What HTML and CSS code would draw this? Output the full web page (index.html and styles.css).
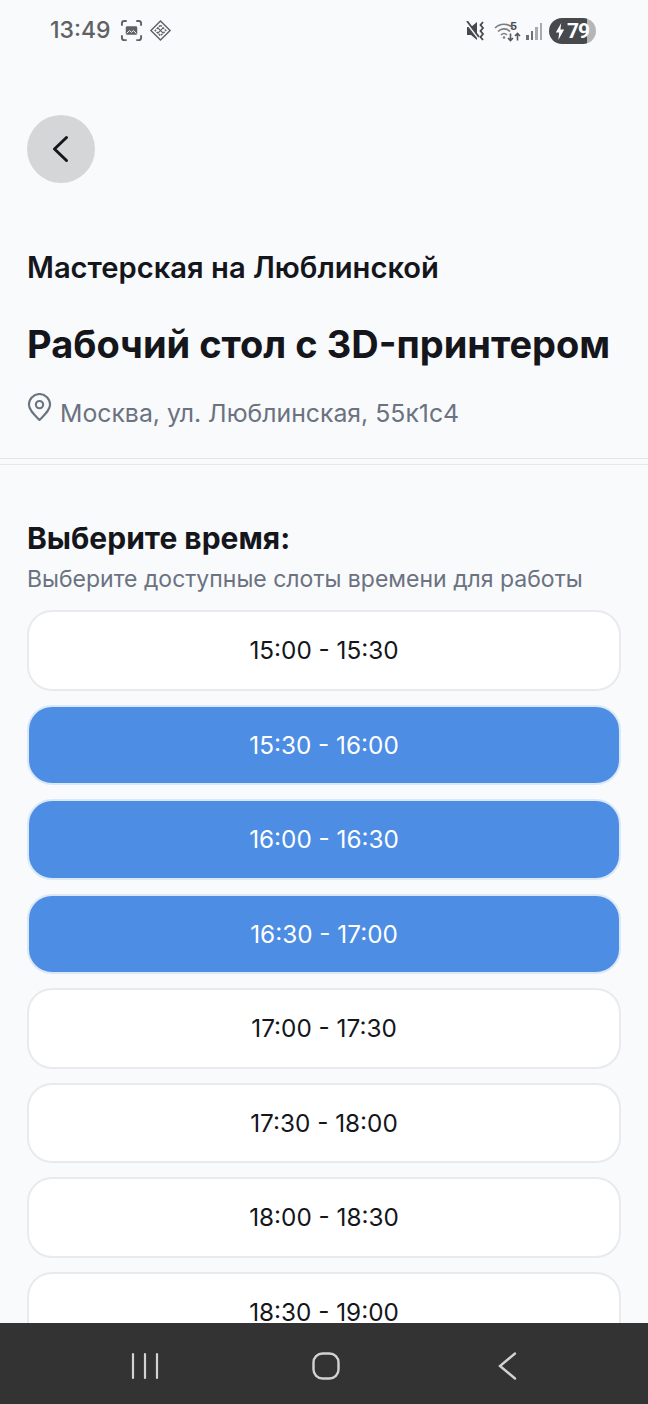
FILE: index.html
```html
<!DOCTYPE html>
<html lang="ru">
<head>
  <meta charset="UTF-8" />
  <meta name="viewport" content="width=device-width, initial-scale=1.0" />
  <title>Выбор времени</title>
  <link rel="stylesheet" href="styles.css">
</head>
<body>
  <div class="app">
    <!-- Статус бар -->
    <div class="status-bar">
      <div class="status-left">
        <span class="clock">13:49</span>
        <svg class="status-icon" width="23" height="23" viewBox="0 0 24 24" fill="none" stroke="#5f6165" stroke-width="2">
          <path d="M2 7V4.500A2.500 2.500 0 0 1 4.500 2H7M17 2h2.500A2.500 2.500 0 0 1 22 4.500V7M22 17v2.500a2.500 2.500 0 0 1-2.500 2.500H17M7 22H4.500A2.500 2.500 0 0 1 2 19.500V17"/>
          <rect x="6" y="7.500" width="12" height="9" rx="1.500" fill="#5f6165" stroke="none"/>
          <path d="M7 15l3-3 2 2 2-2 3 3" stroke="#f9fafc" stroke-width="1"/>
        </svg>
        <svg class="status-icon" width="23" height="23" viewBox="0 0 24 24" fill="none" stroke="#5f6165" stroke-width="1.500">
          <path d="M12 2l10 10-10 10L2 12z"/>
          <path d="M12 6.500l5.500 5.500-5.500 5.500L6.500 12z" stroke-dasharray="2 1.200"/>
          <path d="M9 9l6 6M15 9l-6 6" stroke-width="1.200"/>
        </svg>
      </div>
      <div class="status-right">
        <svg class="mute-icon" width="20" height="20" viewBox="0 0 20 20" fill="none">
          <path d="M1 6h4l6-5v18l-6-5H1z" fill="#48494d"/>
          <path d="M0 1l13 17" stroke="#f9fafc" stroke-width="2"/>
          <path d="M1 0l12 16" stroke="#48494d" stroke-width="1.800"/>
          <path d="M17 1l-2.500 3 2.500 3-2.500 3 2.500 3-2.500 3 2.500 3" stroke="#48494d" stroke-width="1.800"/>
        </svg>
        <svg width="32" height="24" viewBox="0 0 32 24" fill="none" stroke="#7b7d81" stroke-width="1.600">
          <path d="M1 9c5-5 13-5 18 0M4 12.500c3.500-3.500 8.500-3.500 12 0M7 16c2-2 4-2 6 0"/>
          <circle cx="10" cy="18.500" r="1.300" fill="#7b7d81" stroke="none"/>
          <path d="M16.500 14.500v7M14 19l2.500 2.500L19 19" stroke="#55575b"/>
          <path d="M23.500 21.500v-7M21 17l2.500-2.500L26 17" stroke="#55575b"/>
        </svg>
        <span class="wifi-num">5</span>
        <div class="signal">
          <i class="sig-1"></i><i class="sig-2"></i><i class="sig-3"></i><i class="sig-4"></i>
        </div>
        <div class="battery">
          <svg width="10" height="17" viewBox="0 0 12 16" preserveAspectRatio="none"><path d="M7.500 0L1 9h4l-1 7 7-10H6.500z" fill="#fff"/></svg>
          <span>79</span>
        </div>
      </div>
    </div>

    <div class="content">
      <header class="head">
        <button class="back-btn">
          <svg width="20" height="30" viewBox="0 0 20 30" fill="none" stroke="#14161b" stroke-width="3" stroke-linecap="round" stroke-linejoin="round">
            <path d="M15.500 3.500L3.500 15l12 11.500"/>
          </svg>
        </button>
        <div class="place-name">Мастерская на Люблинской</div>
        <h1 class="title">Рабочий стол с 3D-принтером</h1>
        <div class="address">
          <svg class="pin" width="25" height="29" viewBox="0 0 26 30" fill="none" stroke="#6b7280" stroke-width="2.200" stroke-linejoin="round">
            <path d="M13 28C8 23 2 18 2 12a11 11 0 0 1 22 0c0 6-6 11-11 16z"/>
            <circle cx="13" cy="12" r="3.800"/>
          </svg>
          <span>Москва, ул. Люблинская, 55к1с4</span>
        </div>
      </header>

      <section class="slots">
        <h2 class="slots-title">Выберите время:</h2>
        <p class="slots-hint">Выберите доступные слоты времени для работы</p>
        <div class="slot-list">
          <div class="slot">15:00 - 15:30</div>
          <div class="slot selected">15:30 - 16:00</div>
          <div class="slot selected">16:00 - 16:30</div>
          <div class="slot selected">16:30 - 17:00</div>
          <div class="slot">17:00 - 17:30</div>
          <div class="slot">17:30 - 18:00</div>
          <div class="slot">18:00 - 18:30</div>
          <div class="slot">18:30 - 19:00</div>
        </div>
      </section>
    </div>

    <!-- Навигация андроид -->
    <div class="nav-bar">
      <svg width="28" height="28" viewBox="0 0 28 28" fill="none" stroke="#d2d2d2" stroke-width="2.200" stroke-linecap="round">
        <path d="M2 2v24M14 2v24M26 2v24"/>
      </svg>
      <svg width="28" height="28" viewBox="0 0 28 28" fill="none" stroke="#d2d2d2" stroke-width="2.400">
        <rect x="1.500" y="1.500" width="25" height="25" rx="9"/>
      </svg>
      <svg class="nav-back" width="20" height="28" viewBox="0 0 20 28" fill="none" stroke="#d2d2d2" stroke-width="2.400" stroke-linecap="round">
        <path d="M17 1.500L2 14l15 12.500"/>
      </svg>
    </div>
  </div>
</body>
</html>
```

FILE: styles.css
```css
html, body {
  margin: 0;
  padding: 0;
  height: 100%;
  overflow: hidden;
  font-family: 'Inter', 'Liberation Sans', sans-serif;
  background-color: #f9fafc;
}

.app {
  display: flex;
  flex-direction: column;
  height: 1404px;
}

.status-bar {
  height: 60px;
  flex: none;
  display: flex;
  justify-content: space-between;
  align-items: center;
  padding: 0 52px 0 50px;
  box-sizing: border-box;
}

.status-left {
  display: flex;
  align-items: center;
  gap: 6px;
}

.clock {
  font-size: 23px;
  font-weight: 500;
  color: #5f6165;
  margin-right: 3px;
}

.status-icon {
  flex: none;
}

.status-right {
  display: flex;
  align-items: center;
  position: relative;
  margin-top: 2px;
}

.mute-icon {
  margin-right: 8px;
}

.wifi-num {
  position: absolute;
  left: 44px;
  top: 1px;
  font-size: 11px;
  font-weight: 700;
  color: #48494d;
}

.signal {
  display: flex;
  align-items: flex-end;
  gap: 2px;
  height: 17px;
  margin: 0 7px 0 0;
}

.signal i {
  display: block;
  width: 2.500px;
  background: #a8aaad;
}

.signal .sig-1 { height: 5px; background: #6d6f73; }
.signal .sig-2 { height: 9px; background: #6d6f73; }
.signal .sig-3 { height: 13px; }
.signal .sig-4 { height: 17px; }

.battery {
  width: 47px;
  height: 26px;
  border-radius: 13px;
  background: linear-gradient(90deg, #48494d 0, #48494d 80%, #b5b6b8 80%);
  display: flex;
  align-items: center;
  gap: 2px;
  padding-left: 6px;
  box-sizing: border-box;
  color: #fff;
  font-family: 'Roboto', sans-serif;
  font-size: 21px;
  font-weight: 700;
  letter-spacing: -1px;
}

.content {
  flex: 1;
  min-height: 0;
  overflow: hidden;
}

.head {
  padding: 55px 27px 0;
  height: 399px;
  box-sizing: border-box;
  border-bottom: 1px solid #e2e4e8;
}

.back-btn {
  display: flex;
  align-items: center;
  justify-content: center;
  width: 68px;
  height: 68px;
  padding: 0;
  border: none;
  border-radius: 50%;
  background: #d5d6d8;
}

.place-name {
  margin-top: 67px;
  font-size: 29.150px;
  line-height: 36px;
  font-weight: 600;
  color: #14161b;
}

.title {
  margin: 35px 0 0;
  font-size: 38px;
  line-height: 46px;
  font-weight: 700;
  color: #14161b;
}

.address {
  display: flex;
  align-items: flex-start;
  gap: 8px;
  margin-top: 30px;
  font-size: 24.800px;
  line-height: 32px;
  color: #6b7280;
}

.pin {
  margin-top: -4px;
  flex: none;
}

.slots {
  margin-top: 5px;
  padding: 0 27px;
  border-top: 1px solid #e5e7eb;
}

.slots-title {
  margin: 55px 0 0;
  font-size: 30px;
  line-height: 36px;
  font-weight: 700;
  color: #14161b;
}

.slots-hint {
  margin: 8px 0 0;
  font-size: 23px;
  line-height: 30px;
  color: #6b7280;
}

.slot-list {
  display: flex;
  flex-direction: column;
  gap: 14px;
  margin-top: 16px;
}

.slot {
  height: 80.500px;
  flex: none;
  box-sizing: border-box;
  border: 2px solid #e8eaee;
  border-radius: 25px;
  background: #fff;
  display: flex;
  align-items: center;
  justify-content: center;
  font-size: 24.300px;
  color: #14161b;
}

.slot.selected {
  background: #4d8de4;
  border-color: #dbe8f8;
  color: #fff;
}

.nav-bar {
  height: 81px;
  flex: none;
  background: #333333;
  display: flex;
  align-items: center;
  gap: 153px;
  padding: 5px 0 0 131px;
  box-sizing: border-box;
}

.nav-back {
  margin-left: 5px;
}
```
